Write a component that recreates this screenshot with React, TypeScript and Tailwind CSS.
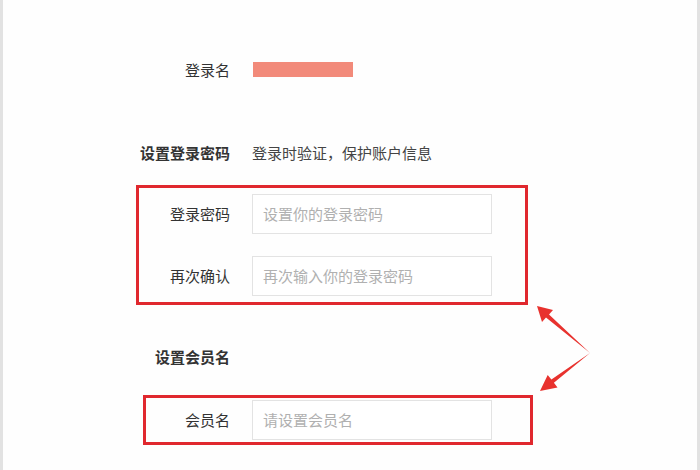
import React from 'react';

const font = { fontFamily: '"Noto Sans CJK SC", "Noto Sans", sans-serif' };

function Field({ label, placeholder, labelWidth }: { label: string; placeholder: string; labelWidth: string }) {
  return (
    <div className="flex items-center">
      <div className={`${labelWidth} text-right text-[15px] leading-[20px] text-[#333]`}>{label}</div>
      <div className="ml-[22px] flex h-[40px] w-[240px] items-center border border-[#e3e3e3] bg-white pl-[10px] text-[15px] text-[#b0b0b0]">
        {placeholder}
      </div>
    </div>
  );
}

function Arrows() {
  return (
    <svg className="pointer-events-none absolute left-0 top-0" width="700" height="470" viewBox="0 0 700 470">
      <polygon
        fill="#e8322e"
        points="534,306 550,310 546,314.5 587,353 543,317.5 539,322"
      />
      <polygon
        fill="#e8322e"
        points="537,391 554.5,387.5 550.9,382.8 587,353 548.4,379.6 544.7,374.9"
      />
    </svg>
  );
}

export default function App() {
  return (
    <div
      style={font}
      className="relative h-[470px] w-[700px] overflow-hidden border-x-[3px] border-[#e2e2e2] bg-[#fefefe]"
    >
      {/* 登录名 */}
      <div className="ml-[135px] mt-[62px] flex h-[15px] items-center">
        <div className="w-[92px] text-right text-[15px] leading-[20px] text-[#333]">登录名</div>
        <div className="ml-[23px] h-[15px] w-[100px] bg-[#f28a7a]" />
      </div>

      {/* 设置登录密码 */}
      <div className="ml-[135px] mt-[66px] flex items-center">
        <div className="w-[92px] text-right text-[15px] font-bold leading-[20px] text-[#333]">设置登录密码</div>
        <div className="ml-[22px] text-[15px] leading-[20px] text-[#444]">登录时验证，保护账户信息</div>
      </div>

      <div className="ml-[133px] mt-[22px] flex h-[120px] w-[392px] flex-col gap-[22px] border-[3px] border-[#e0282e] pt-[6px]">
        <Field label="登录密码" placeholder="设置你的登录密码" labelWidth="w-[91px]" />
        <Field label="再次确认" placeholder="再次输入你的登录密码" labelWidth="w-[91px]" />
      </div>

      {/* 设置会员名 */}
      <div className="ml-[135px] mt-[42px] flex items-center">
        <div className="w-[92px] text-right text-[15px] font-bold leading-[20px] text-[#333]">设置会员名</div>
      </div>

      <div className="ml-[140px] mt-[28px] flex h-[50px] w-[390px] items-center border-[3px] border-[#e0282e]">
        <Field label="会员名" placeholder="请设置会员名" labelWidth="w-[84px]" />
      </div>

      <Arrows />
    </div>
  );
}
